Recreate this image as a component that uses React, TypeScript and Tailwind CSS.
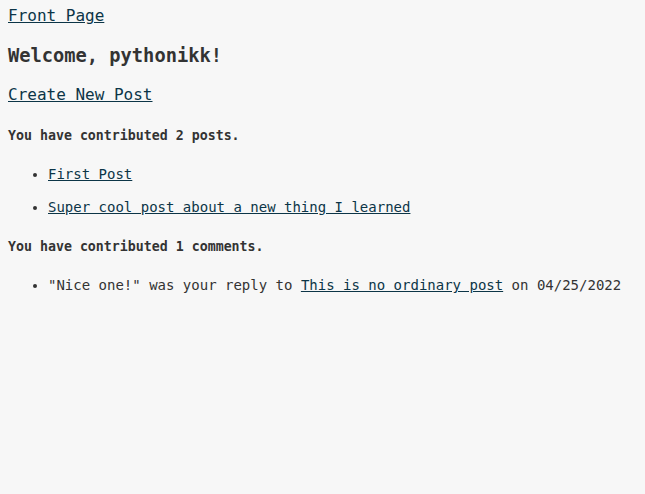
import React from 'react';

const mono = { fontFamily: '"DejaVu Sans Mono", monospace' };

const posts = ['First Post', 'Super cool post about a new thing I learned'];

export default function App() {
  return (
    <div
      className="min-h-screen bg-[#f7f7f7] text-[#333333] pl-2 pt-[6px]"
      style={mono}
    >
      <div className="text-[16px] leading-[19px]">
        <a href="#" className="text-[#0c3547] underline">Front Page</a>
      </div>
      <h3 className="text-[18.72px] leading-[22px] font-bold mt-[20px] mb-[18px]">
        Welcome, pythonikk!
      </h3>
      <div className="text-[16px] leading-[19px]">
        <a href="#" className="text-[#0c3547] underline">Create New Post</a>
      </div>
      <h5 className="text-[13.28px] leading-[15.5px] font-bold mt-[24px] mb-[22px]">
        You have contributed 2 posts.
      </h5>
      <ul className="list-disc pl-10 text-[14px] leading-[16px]">
        {posts.map((p) => (
          <li key={p} className="mb-[17px] last:mb-0">
            <a href="#" className="text-[#0c3547] underline">{p}</a>
          </li>
        ))}
      </ul>
      <h5 className="text-[13.28px] leading-[15.5px] font-bold mt-[24px] mb-[23px]">
        You have contributed 1 comments.
      </h5>
      <ul className="list-disc pl-10 text-[14px] leading-[16px]">
        <li>
          "Nice one!" was your reply to{' '}
          <a href="#" className="text-[#0c3547] underline">This is no ordinary post</a>{' '}
          on 04/25/2022
        </li>
      </ul>
    </div>
  );
}
